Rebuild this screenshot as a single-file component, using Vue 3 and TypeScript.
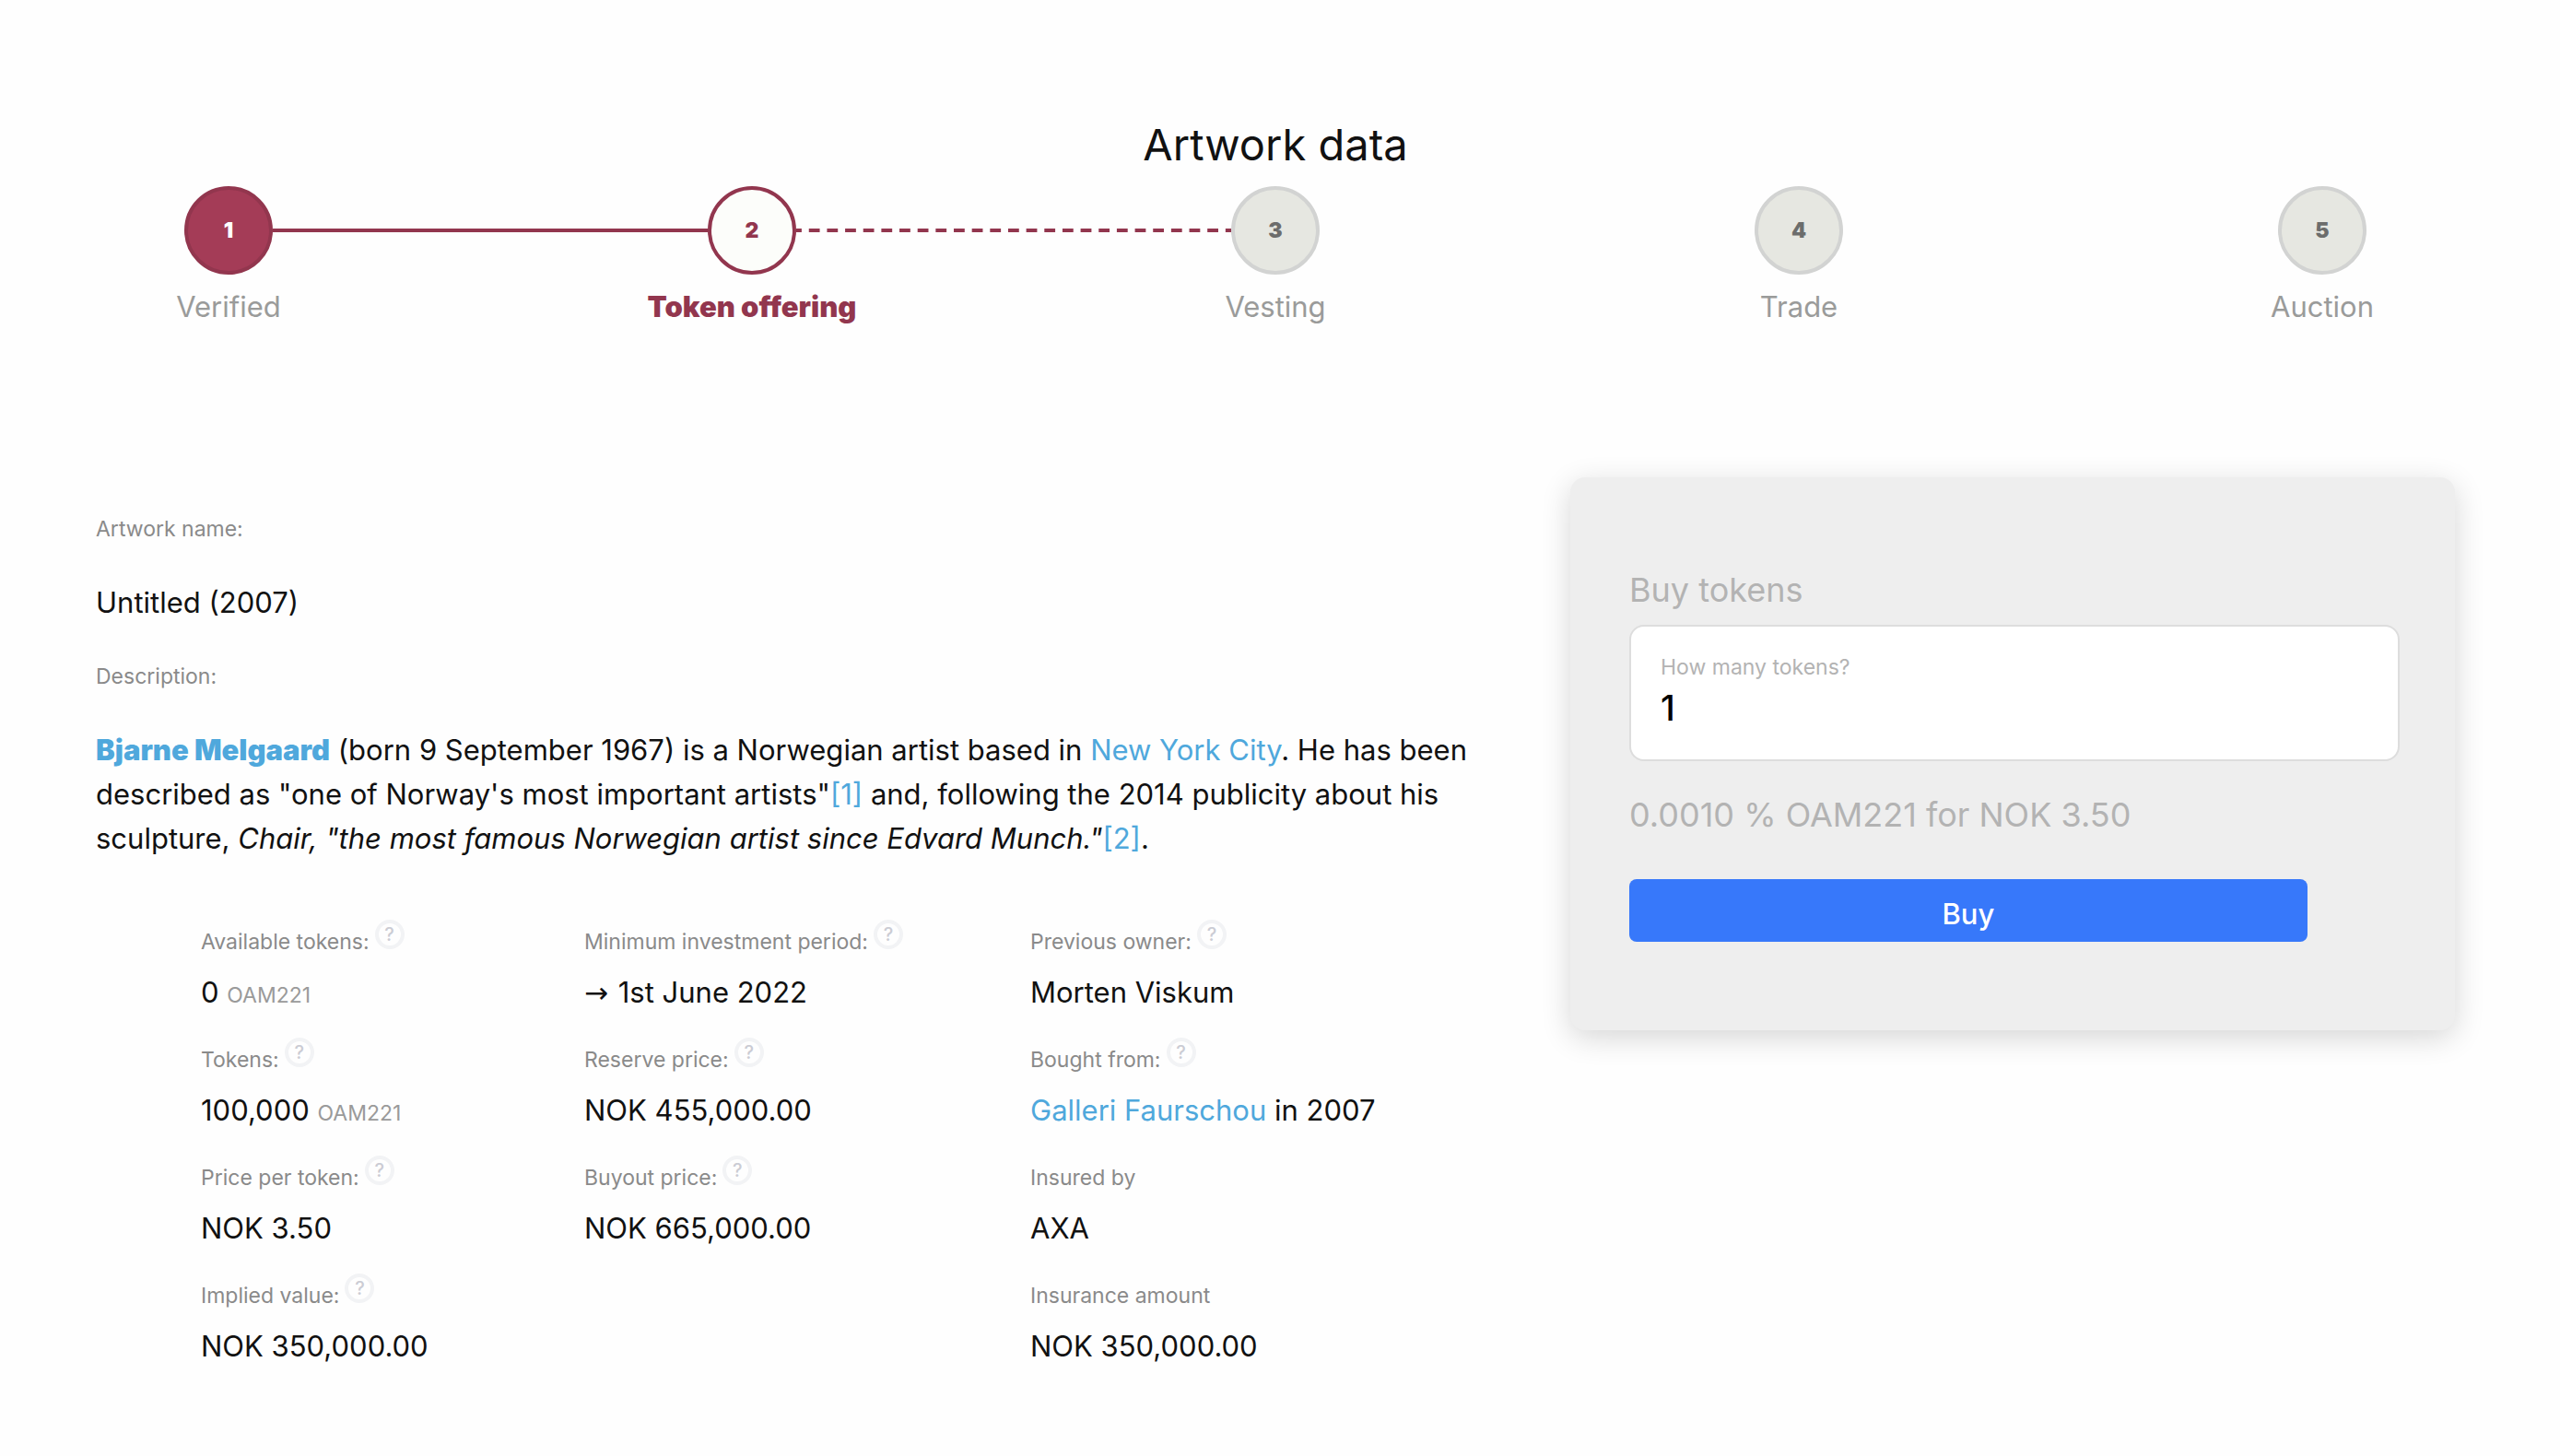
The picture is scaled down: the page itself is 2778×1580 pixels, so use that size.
<script setup lang="ts">
import { computed, ref } from 'vue'

type StepState = 'done' | 'current' | 'upcoming'

interface Step {
  label: string
  state: StepState
}

interface Fact {
  label: string
  value: string
  unit?: string
  arrow?: boolean
  link?: string
  help?: boolean
}

const steps: Step[] = [
  { label: 'Verified', state: 'done' },
  { label: 'Token offering', state: 'current' },
  { label: 'Vesting', state: 'upcoming' },
  { label: 'Trade', state: 'upcoming' },
  { label: 'Auction', state: 'upcoming' },
]

const factColumns: Fact[][] = [
  [
    { label: 'Available tokens:', value: '0', unit: 'OAM221', help: true },
    { label: 'Tokens:', value: '100,000', unit: 'OAM221', help: true },
    { label: 'Price per token:', value: 'NOK 3.50', help: true },
    { label: 'Implied value:', value: 'NOK 350,000.00', help: true },
  ],
  [
    { label: 'Minimum investment period:', value: '1st June 2022', arrow: true, help: true },
    { label: 'Reserve price:', value: 'NOK 455,000.00', help: true },
    { label: 'Buyout price:', value: 'NOK 665,000.00', help: true },
  ],
  [
    { label: 'Previous owner:', value: 'Morten Viskum', help: true },
    { label: 'Bought from:', value: 'in 2007', link: 'Galleri Faurschou', help: true },
    { label: 'Insured by', value: 'AXA' },
    { label: 'Insurance amount', value: 'NOK 350,000.00' },
  ],
]

const totalTokens = 100000
const pricePerToken = 3.5
const amount = ref('1')

const share = computed(() => ((Number(amount.value) / totalTokens) * 100).toFixed(4))
const cost = computed(() => (Number(amount.value) * pricePerToken).toFixed(2))
</script>

<template>
  <main class="page">
    <header class="head">
      <h1 class="title">Artwork data</h1>
      <ol class="steps">
        <template v-for="(step, i) in steps" :key="step.label">
          <li class="step" :class="step.state">
            <span class="dot">{{ i + 1 }}</span>
            <span class="step-label">{{ step.label }}</span>
          </li>
          <li v-if="i < steps.length - 1" class="line" :class="step.state" aria-hidden="true"></li>
        </template>
      </ol>
    </header>

    <div class="body">
      <section class="details">
        <p class="caption">Artwork name:</p>
        <p class="text">Untitled (2007)</p>
        <p class="caption">Description:</p>
        <p class="text">
          <a class="artist" href="#artist">Bjarne Melgaard</a> (born 9 September 1967) is a Norwegian artist based in
          <a href="#city">New York City</a>. He has been described as "one of Norway's most important
          artists"<a href="#ref-1">[1]</a> and, following the 2014 publicity about his sculpture,
          <i>Chair, "the most famous Norwegian artist since Edvard Munch."</i><a href="#ref-2">[2]</a>.
        </p>

        <div class="facts">
          <dl v-for="(column, c) in factColumns" :key="c" class="fact-column">
            <div v-for="fact in column" :key="fact.label" class="fact">
              <dt class="fact-label">
                <span>{{ fact.label }}</span>
                <button v-if="fact.help" type="button" class="help" :aria-label="'Help: ' + fact.label">?</button>
              </dt>
              <dd class="fact-value">
                <span v-if="fact.arrow" class="arrow">→</span>
                <a v-if="fact.link" href="#seller">{{ fact.link }}</a>
                {{ fact.value }}
                <small v-if="fact.unit" class="unit">{{ fact.unit }}</small>
              </dd>
            </div>
          </dl>
        </div>
      </section>

      <form class="card" @submit.prevent>
        <h2 class="card-title">Buy tokens</h2>
        <div class="field">
          <label for="amount">How many tokens?</label>
          <input id="amount" v-model="amount" type="text" inputmode="numeric" />
        </div>
        <p class="summary">{{ share }} % OAM221 for NOK {{ cost }}</p>
        <button type="submit" class="buy">Buy</button>
      </form>
    </div>
  </main>
</template>

<style>
body {
  margin: 0;
  background: #fefefe;
}
</style>

<style scoped>
.page {
  font-family: Inter, "Liberation Sans", sans-serif;
  font-size: 31px;
  line-height: 48px;
  color: #111;
}

.page :is(h1, h2, p, ol, dl, dd) {
  margin: 0;
  padding: 0;
  font-weight: 400;
}

a {
  color: #4fa8dc;
  text-decoration: none;
}

.artist {
  font-weight: 900;
}

.head {
  padding: 125px 210px 0 200px;
}

.page .title {
  margin-bottom: 13px;
  font-size: 47px;
  line-height: 64px;
  text-align: center;
}

.steps {
  display: flex;
  list-style: none;
}

.step {
  display: flex;
  flex-direction: column;
  align-items: center;
  gap: 11px;
  width: 96px;
  color: #9a9b9a;
}

.dot {
  display: flex;
  align-items: center;
  justify-content: center;
  box-sizing: border-box;
  width: 96px;
  height: 96px;
  border: 4px solid #d2d3d2;
  border-radius: 50%;
  background: #e6e7e1;
  color: #6c6d6c;
  font-size: 23px;
  font-weight: 900;
}

.step-label {
  white-space: nowrap;
}

.done .dot {
  border-color: #92364e;
  background: #a43c57;
  color: #fff;
}

.current .dot {
  border-color: #92364e;
  background: #fcfdfa;
  color: #92364e;
}

.current .step-label {
  color: #92364e;
  font-weight: 900;
}

.line {
  flex: 1;
  height: 4px;
  margin-top: 46px;
}

.line.done {
  background: #92364e;
}

.line.current {
  background-image: linear-gradient(
    to right,
    #92364e 30%,
    transparent 30% 70%,
    #92364e 70%
  );
  background-repeat: round;
  background-size: 20px 4px;
}

.body {
  display: grid;
  grid-template-columns: 5fr 3fr;
  align-items: start;
  padding: 161px 114px 70px 104px;
}

.details {
  display: flex;
  flex-direction: column;
  gap: 32px;
  padding: 32px 92px 0 0;
}

.caption {
  font-size: 23px;
  color: #8a8a8a;
}

.facts {
  display: grid;
  grid-template-columns: 416fr 484fr 494fr;
  padding: 32px 0 0 114px;
}

.fact-column {
  display: flex;
  flex-direction: column;
  gap: 25px;
}

.fact {
  display: flex;
  flex-direction: column;
  gap: 15px;
}

.fact-label {
  display: flex;
  align-items: flex-end;
  gap: 6px;
  height: 40px;
  font-size: 23px;
  line-height: 32px;
  color: #8a8a8a;
  white-space: nowrap;
}

.help {
  align-self: flex-start;
  box-sizing: border-box;
  width: 32px;
  height: 32px;
  padding: 0;
  border: 4px solid #f2f3f5;
  border-radius: 50%;
  background: none;
  color: #cbccd4;
  font: inherit;
  font-size: 20px;
  font-weight: 500;
  line-height: 24px;
}

.fact-value {
  height: 48px;
  white-space: nowrap;
}

.arrow {
  margin-right: 2px;
  font-family: "DejaVu Sans", sans-serif;
}

.unit {
  font-size: 23px;
  line-height: 32px;
  color: #9a9a9a;
}

.card {
  box-sizing: border-box;
  padding: 94px 60px 96px 64px;
  border-radius: 16px;
  background: #eee;
  box-shadow: 0 8px 32px rgba(0, 0, 0, 0.16);
}

.page .card-title,
.page .summary {
  font-size: 36px;
  line-height: 56px;
  color: #b3b3b3;
}

.field {
  display: flex;
  flex-direction: column;
  box-sizing: border-box;
  height: 148px;
  margin-top: 10px;
  padding: 24px 32px;
  border: 2px solid #ddd;
  border-radius: 16px;
  background: #fff;
}

.field label {
  font-size: 23px;
  line-height: 40px;
  color: #b3b3b3;
}

.field input {
  width: 100%;
  height: 48px;
  padding: 0;
  border: 0;
  outline: 0;
  background: none;
  color: #000;
  font: inherit;
  font-size: 38px;
  font-weight: 500;
}

.page .summary {
  margin: 30px 0 42px;
}

.buy {
  display: block;
  width: 88%;
  height: 68px;
  padding: 8px 0 0;
  border: 0;
  border-radius: 8px;
  background: #3778fa;
  color: #fff;
  font: inherit;
  font-weight: 500;
}
</style>
